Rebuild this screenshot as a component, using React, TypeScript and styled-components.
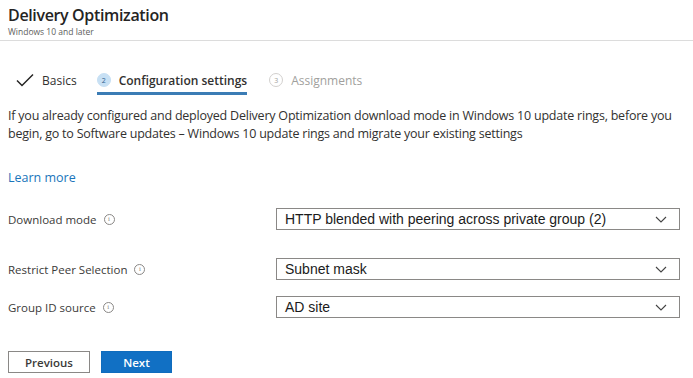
import React from "react";
import styled, { createGlobalStyle } from "styled-components";

const GlobalStyle = createGlobalStyle`
  body {
    margin: 0;
    background: #ffffff;
    font-family: "Open Sans", "Noto Sans", sans-serif;
    color: #323130;
  }
`;

const Page = styled.div`
  width: 693px;
  height: 378px;
  overflow: hidden;
  background: #ffffff;
`;

const Header = styled.div`
  padding: 4px 8px 0;
  height: 36px;
  border-bottom: 1px solid #dcdcdc;
`;

const Title = styled.h1`
  margin: 0;
  font-size: 16px;
  font-weight: 600;
  line-height: 22px;
  color: #252423;
  letter-spacing: -0.35px;
`;

const Subtitle = styled.div`
  font-size: 8.5px;
  line-height: 11px;
  color: #605e5c;
`;

const Steps = styled.div`
  display: flex;
  align-items: center;
  height: 30px;
  margin: 24px 0 0 16px;
  gap: 20px;
`;

const Step = styled.div<{ $active?: boolean; $disabled?: boolean }>`
  display: flex;
  align-items: center;
  gap: 8px;
  height: 30px;
  font-size: 12px;
  font-weight: ${(p) => (p.$active ? 600 : 400)};
  color: ${(p) => (p.$disabled ? "#a19f9d" : "#323130")};
  border-bottom: 3px solid ${(p) => (p.$active ? "#3b7cb5" : "transparent")};
  box-sizing: border-box;
  padding-top: 3px;
  margin-left: ${(p) => (p.$disabled ? 2 : 0)}px;
`;

const Bubble = styled.span<{ $active?: boolean }>`
  width: 12px;
  height: 12px;
  border-radius: 50%;
  display: inline-flex;
  align-items: center;
  justify-content: center;
  font-size: 7px;
  font-weight: 400;
  background: ${(p) => (p.$active ? "#c7e0f4" : "#ffffff")};
  color: ${(p) => (p.$active ? "#2b5f8d" : "#a19f9d")};
  border: 1px solid ${(p) => (p.$active ? "#c7e0f4" : "#d2d0ce")};
`;

const Body = styled.div`
  padding: 0 8px;
`;

const Intro = styled.p`
  margin: 12px 0 0;
  font-size: 12.5px;
  line-height: 18px;
  color: #323130;
  letter-spacing: -0.22px;
`;

const LearnMore = styled.a`
  display: inline-block;
  margin-top: 26px;
  font-size: 12.5px;
  color: #1a75bb;
  text-decoration: none;
`;

const Form = styled.div`
  margin-top: 21px;
  display: flex;
  flex-direction: column;
`;

const Row = styled.div<{ $gap: number }>`
  display: grid;
  grid-template-columns: 268px 404px;
  align-items: center;
  margin-bottom: ${(p) => p.$gap}px;
`;

const Label = styled.div`
  display: flex;
  align-items: center;
  gap: 7px;
  font-size: 11.5px;
  color: #3b3a39;
`;

const Info = styled.span`
  width: 9px;
  height: 9px;
  border: 1px solid #8a8886;
  border-radius: 50%;
  display: inline-flex;
  align-items: center;
  justify-content: center;
  font-size: 7px;
  line-height: 1;
  color: #8a8886;
  font-family: "Liberation Serif", serif;
`;

const Select = styled.div`
  height: 22px;
  box-sizing: border-box;
  border: 1px solid #8a8886;
  display: flex;
  align-items: center;
  justify-content: space-between;
  padding: 0 12px 0 8px;
  font-family: "Liberation Sans", Arial, sans-serif;
  font-size: 14px;
  color: #1b1b1b;
`;

const Buttons = styled.div`
  display: flex;
  gap: 11px;
  margin-top: 33px;
`;

const Button = styled.button<{ $primary?: boolean }>`
  height: 22px;
  width: ${(p) => (p.$primary ? 71 : 82)}px;
  box-sizing: border-box;
  font-family: "Open Sans", sans-serif;
  font-size: 11.5px;
  font-weight: 600;
  border: 1px solid ${(p) => (p.$primary ? "#0f6cbd" : "#8a8886")};
  background: ${(p) => (p.$primary ? "#1170c4" : "#ffffff")};
  color: ${(p) => (p.$primary ? "#ffffff" : "#3b3a39")};
  padding: 0;
`;

const Check = () => (
  <svg width="18" height="14" viewBox="0 0 18 14">
    <path d="M1 7.5 L6 12.5 L17 1.5" fill="none" stroke="#252423" strokeWidth="1.5" />
  </svg>
);

const Chevron = () => (
  <svg width="12" height="7" viewBox="0 0 12 7">
    <path d="M1 1 L6 6 L11 1" fill="none" stroke="#444" strokeWidth="1.1" />
  </svg>
);

const fields = [
  { label: "Download mode", value: "HTTP blended with peering across private group (2)", gap: 28 },
  { label: "Restrict Peer Selection", value: "Subnet mask", gap: 16 },
  { label: "Group ID source", value: "AD site", gap: 0 },
];

export default function App() {
  return (
    <Page>
      <GlobalStyle />
      <Header>
        <Title>Delivery Optimization</Title>
        <Subtitle>Windows 10 and later</Subtitle>
      </Header>
      <Steps>
        <Step>
          <Check />
          Basics
        </Step>
        <Step $active>
          <Bubble $active>2</Bubble>
          Configuration settings
        </Step>
        <Step $disabled>
          <Bubble>3</Bubble>
          Assignments
        </Step>
      </Steps>
      <Body>
        <Intro>
          If you already configured and deployed Delivery Optimization download mode in Windows 10 update rings, before you
          begin, go to Software updates – Windows 10 update rings and migrate your existing settings
        </Intro>
        <LearnMore href="#">Learn more</LearnMore>
        <Form>
          {fields.map((f) => (
            <Row key={f.label} $gap={f.gap}>
              <Label>
                {f.label}
                <Info>i</Info>
              </Label>
              <Select>
                {f.value}
                <Chevron />
              </Select>
            </Row>
          ))}
        </Form>
        <Buttons>
          <Button>Previous</Button>
          <Button $primary>Next</Button>
        </Buttons>
      </Body>
    </Page>
  );
}
